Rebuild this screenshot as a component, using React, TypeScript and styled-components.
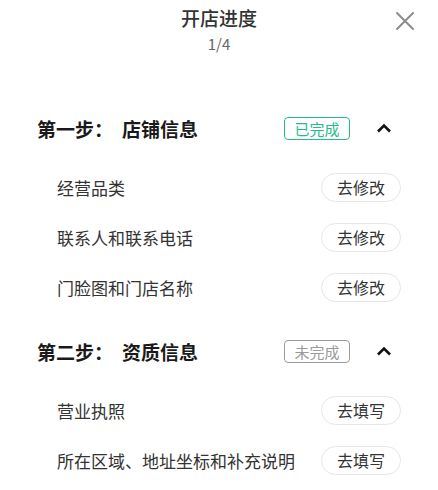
import React from "react";
import styled, { createGlobalStyle } from "styled-components";

const GlobalStyle = createGlobalStyle`
  body {
    margin: 0;
    background: #fff;
    font-family: "Noto Sans CJK SC", "Noto Sans", sans-serif;
    color: #333;
  }
`;

interface StepItem {
  label: string;
  action: string;
}

interface Step {
  index: string;
  title: string;
  done: boolean;
  items: StepItem[];
}

const steps: Step[] = [
  {
    index: "第一步：",
    title: "店铺信息",
    done: true,
    items: [
      { label: "经营品类", action: "去修改" },
      { label: "联系人和联系电话", action: "去修改" },
      { label: "门脸图和门店名称", action: "去修改" },
    ],
  },
  {
    index: "第二步：",
    title: "资质信息",
    done: false,
    items: [
      { label: "营业执照", action: "去填写" },
      { label: "所在区域、地址坐标和补充说明", action: "去填写" },
    ],
  },
];

export default function App() {
  return (
    <>
      <GlobalStyle />
      <Sheet>
        <Header>
          <Title>开店进度</Title>
          <Progress>1/4</Progress>
          <CloseButton aria-label="关闭">
            <svg width="20" height="20" viewBox="0 0 20 20">
              <path
                d="M2 2 L18 18 M18 2 L2 18"
                stroke="#8c8c8c"
                strokeWidth="2"
                strokeLinecap="round"
              />
            </svg>
          </CloseButton>
        </Header>
        <Steps>
          {steps.map((step) => (
            <Section key={step.index}>
              <SectionHeader>
                <SectionTitle>
                  {step.index}
                  <span>{step.title}</span>
                </SectionTitle>
                <Badge done={step.done}>{step.done ? "已完成" : "未完成"}</Badge>
                <Chevron>
                  <svg width="16" height="10" viewBox="0 0 16 10">
                    <path
                      d="M2 8.5 L8 2.5 L14 8.5"
                      fill="none"
                      stroke="#111"
                      strokeWidth="2.6"
                      strokeLinejoin="miter"
                    />
                  </svg>
                </Chevron>
              </SectionHeader>
              <ItemList>
                {step.items.map((item) => (
                  <Item key={item.label}>
                    <ItemLabel>{item.label}</ItemLabel>
                    <ActionButton>{item.action}</ActionButton>
                  </Item>
                ))}
              </ItemList>
            </Section>
          ))}
        </Steps>
      </Sheet>
    </>
  );
}

const Sheet = styled.div`
  width: 438px;
  min-height: 490px;
  box-sizing: border-box;
  padding: 0 37px 0 37px;
`;

const Header = styled.div`
  position: relative;
  display: flex;
  flex-direction: column;
  align-items: center;
  padding-top: 4px;
  height: 106px;
  box-sizing: border-box;
`;

const Title = styled.div`
  font-size: 19px;
  line-height: 27px;
  font-weight: 500;
  color: #333;
`;

const Progress = styled.div`
  font-size: 15px;
  line-height: 24px;
  color: #666;
  margin-top: 1px;
`;

const CloseButton = styled.button`
  position: absolute;
  top: 11px;
  right: -14px;
  width: 20px;
  height: 20px;
  padding: 0;
  border: none;
  background: none;
  display: flex;
`;

const Steps = styled.div`
  display: flex;
  flex-direction: column;
  gap: 17px;
`;

const Section = styled.div`
  display: flex;
  flex-direction: column;
`;

const SectionHeader = styled.div`
  display: flex;
  align-items: center;
  height: 44px;
`;

const SectionTitle = styled.div`
  flex: 1;
  font-size: 19px;
  font-weight: 700;
  color: #1a1a1a;

  span {
    margin-left: 9px;
  }
`;

const Badge = styled.div<{ done: boolean }>`
  width: 66px;
  height: 23px;
  box-sizing: border-box;
  display: flex;
  align-items: center;
  justify-content: center;
  border: 1px solid ${({ done }) => (done ? "#22bd87" : "#9a9a9a")};
  color: ${({ done }) => (done ? "#22bd87" : "#9a9a9a")};
  border-radius: 4px;
  font-size: 15px;
`;

const Chevron = styled.div`
  width: 16px;
  margin-left: 26px;
  margin-right: 9px;
  display: flex;
`;

const ItemList = styled.div`
  display: flex;
  flex-direction: column;
  padding-top: 12px;
`;

const Item = styled.div`
  display: flex;
  align-items: center;
  justify-content: space-between;
  height: 50px;
  padding-left: 20px;
`;

const ItemLabel = styled.div`
  font-size: 17px;
  color: #333;
`;

const ActionButton = styled.button`
  width: 80px;
  height: 29px;
  border: 1px solid #e6e6e6;
  border-radius: 15px;
  background: #fff;
  font-family: inherit;
  font-size: 16px;
  color: #333;
  padding: 0;
`;
